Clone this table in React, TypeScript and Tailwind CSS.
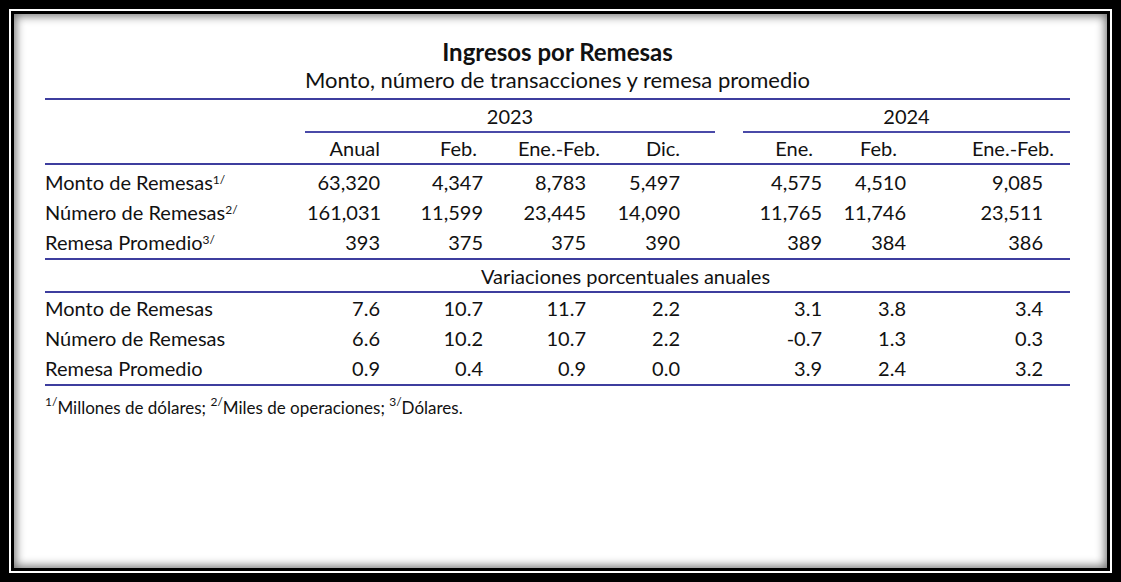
import React from "react";

const font = { fontFamily: "Lato, 'Open Sans', 'Noto Sans', sans-serif" };

const COLS = "grid-cols-[262px_73px_103px_117px_80px_142px_84px_148px]";
const dataPr = ["", "", "", "pr-[14px]", "", "", "", "pr-[11px]"];
const headPr = ["", "", "pr-[6px]", "", "", "pr-[9px]", "pr-[9px]", ""];

const Line = () => <div className="h-[2px] w-[1025px] bg-[#3e3e9e]" />;

type Row = { label: React.ReactNode; vals: string[] };

const rows1: Row[] = [
  { label: <>Monto de Remesas<sup className="text-[12px]">1/</sup></>, vals: ["63,320", "4,347", "8,783", "5,497", "4,575", "4,510", "9,085"] },
  { label: <>Número de Remesas<sup className="text-[12px]">2/</sup></>, vals: ["161,031", "11,599", "23,445", "14,090", "11,765", "11,746", "23,511"] },
  { label: <>Remesa Promedio<sup className="text-[12px]">3/</sup></>, vals: ["393", "375", "375", "390", "389", "384", "386"] },
];

const rows2: Row[] = [
  { label: "Monto de Remesas", vals: ["7.6", "10.7", "11.7", "2.2", "3.1", "3.8", "3.4"] },
  { label: "Número de Remesas", vals: ["6.6", "10.2", "10.7", "2.2", "-0.7", "1.3", "0.3"] },
  { label: "Remesa Promedio", vals: ["0.9", "0.4", "0.9", "0.0", "3.9", "2.4", "3.2"] },
];

const DataRow = ({ r }: { r: Row }) => (
  <div className={`grid ${COLS} h-[30px] items-center`}>
    <div className="whitespace-nowrap">{r.label}</div>
    {r.vals.map((v, i) => (
      <div key={i} className={`text-right whitespace-nowrap ${dataPr[i + 1]}`}>{v}</div>
    ))}
  </div>
);

export default function App() {
  const headers = ["Anual", "Feb.", "Ene.-Feb.", "Dic.", "Ene.", "Feb.", "Ene.-Feb."];
  return (
    <div className="w-[1121px] h-[582px] bg-black p-[9px]" style={font}>
      <div className="w-full h-full bg-white p-[2px]">
        <div className="w-full h-full border-[3px] border-black bg-white shadow-[inset_0_0_10px_2px_rgba(0,0,0,0.55)] text-[#111] text-[20px]">
          <div className="ml-[31px] w-[1025px] flex flex-col">
            <div className="h-[28px] mt-[24px] flex items-center justify-center font-bold text-[24px]">Ingresos por Remesas</div>
            <div className="h-[27px] flex items-center justify-center text-[22px]">Monto, número de transacciones y remesa promedio</div>
            <div className="mt-[5px]"><Line /></div>
            <div className="flex h-[33px]">
              <div className="w-[260px]" />
              <div className="w-[410px] border-b-2 border-[#4a4aa8] flex items-center justify-center">2023</div>
              <div className="w-[28px]" />
              <div className="w-[327px] border-b-2 border-[#4a4aa8] flex items-center justify-center">2024</div>
            </div>
            <div className={`grid ${COLS} h-[30px] items-center`}>
              <div />
              {headers.map((h, i) => (
                <div key={i} className={`text-right whitespace-nowrap ${headPr[i + 1]}`}>{h}</div>
              ))}
            </div>
            <Line />
            <div className="pt-[2px] pb-[1px]">
              {rows1.map((r, i) => <DataRow key={i} r={r} />)}
            </div>
            <Line />
            <div className="h-[31px] flex items-center pl-[436px] whitespace-nowrap">Variaciones porcentuales anuales</div>
            <Line />
            <div className="pb-[1px]">
              {rows2.map((r, i) => <DataRow key={i} r={r} />)}
            </div>
            <Line />
            <div className="mt-[9px] h-[26px] flex items-center text-[17px] whitespace-nowrap">
              <sup className="text-[12px]">1/</sup>Millones de dólares;&nbsp;<sup className="text-[12px]">2/</sup>Miles de operaciones;&nbsp;<sup className="text-[12px]">3/</sup>Dólares.
            </div>
          </div>
        </div>
      </div>
    </div>
  );
}
